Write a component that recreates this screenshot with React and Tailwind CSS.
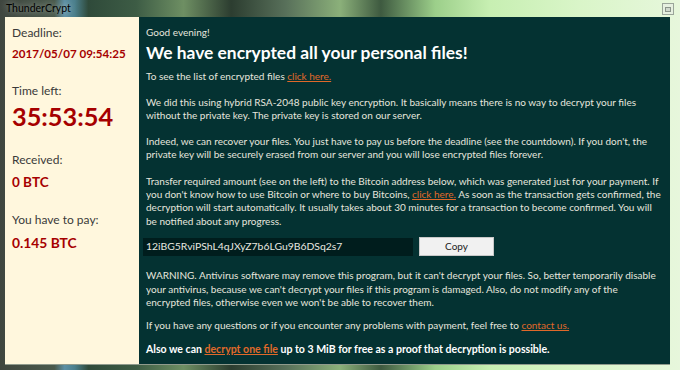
import React from "react";

const F = { fontFamily: "Lato, 'Open Sans', sans-serif" };

function Link({ children }) {
  return <span className="text-[#e0692a] underline underline-offset-1">{children}</span>;
}

export default function App() {
  return (
    <div
      className="relative w-[680px] h-[370px] overflow-hidden bg-[linear-gradient(90deg,#3f463f_0%,#4a5a4c_8%,#5c8fa4_9.5%,#4b7f8c_11%,#2f4a3a_13%,#3d5c45_20%,#6e8f63_27%,#2c3d30_34%,#58705a_42%,#8bb07a_50%,#3e5a40_56%,#9ccf8a_64%,#c7efb2_72%,#d9f5c8_85%,#e7f7dc_100%)]"
      style={F}
    >
      {/* title bar */}
      <div className="h-[17px] flex items-center pl-[6px]">
        <span className="text-[10.5px] text-black leading-none [text-shadow:0_0_6px_rgba(255,255,255,0.6)]">ThunderCrypt</span>
      </div>
      <div className="absolute right-[6px] top-[3px] w-[12px] h-[12px] border border-[#9aa59a] bg-[#e6f0e0] flex items-center justify-center">
        <div className="w-[6px] h-[5px] border border-[#8a948a] bg-[#cfd8cc]" />
      </div>

      {/* content */}
      <div className="ml-[5px] mr-[10px] h-[348px] flex border-b border-[#8f9a8c]">
        {/* left panel */}
        <div className="w-[134px] shrink-0 bg-[#fff7dd] pl-[7px] flex flex-col">
          <div className="mt-[8px] text-[12px] leading-[16px] text-[#3a3a3a]">Deadline:</div>
          <div className="mt-[5px] text-[11.6px] leading-[16px] font-bold text-[#a60000]">2017/05/07 09:54:25</div>
          <div className="mt-[21px] text-[12px] leading-[16px] text-[#3a3a3a]">Time left:</div>
          <div className="mt-[2px] text-[25.3px] leading-[30px] font-bold text-[#a60000]">35:53:54</div>
          <div className="mt-[21px] text-[12px] leading-[16px] text-[#3a3a3a]">Received:</div>
          <div className="mt-[6px] text-[13.5px] leading-[16px] font-bold text-[#a60000]">0 BTC</div>
          <div className="mt-[22px] text-[12px] leading-[16px] text-[#3a3a3a]">You have to pay:</div>
          <div className="mt-[7px] text-[13.8px] leading-[16px] font-bold text-[#a60000]">0.145 BTC</div>
        </div>

        {/* right panel */}
        <div className="flex-1 bg-[#043232] pl-[7px] pr-[2px] flex flex-col text-[#e6e6de] whitespace-nowrap">
          <div className="mt-[8px] text-[10px] leading-[14px]">Good evening!</div>
          <div className="mt-[3px] text-[17.4px] leading-[22px] font-bold text-white">We have encrypted all your personal files!</div>
          <div className="mt-[5px] text-[10px] leading-[14px]">
            To see the list of encrypted files <Link>click here.</Link>
          </div>
          <div className="mt-[13px] text-[10px] leading-[13.4px]">
            We did this using hybrid RSA-2048 public key encryption. It basically means there is no way to decrypt your files
            <br />
            without the private key. The private key is stored on our server.
          </div>
          <div className="mt-[12px] text-[10px] leading-[13.4px]">
            Indeed, we can recover your files. You just have to pay us before the deadline (see the countdown). If you don't, the
            <br />
            private key will be securely erased from our server and you will lose encrypted files forever.
          </div>
          <div className="mt-[13px] text-[10px] leading-[13.4px]">
            Transfer required amount (see on the left) to the Bitcoin address below, which was generated just for your payment. If
            <br />
            you don't know how to use Bitcoin or where to buy Bitcoins, <Link>click here.</Link> As soon as the transaction gets confirmed, the
            <br />
            decryption will start automatically. It usually takes about 30 minutes for a transaction to become confirmed. You will
            <br />
            be notified about any progress.
          </div>
          <div className="mt-[9px] flex items-center gap-[6px] -ml-[3px]">
            <div className="w-[270px] h-[18px] bg-[#001d1d] pl-[3px] flex items-center text-[10.4px] text-[#e8e8e0]">
              12iBG5RviPShL4qJXyZ7b6LGu9B6DSq2s7
            </div>
            <div className="w-[75px] h-[19px] bg-[#f1f1f1] border border-[#c8c8c8] flex items-center justify-center text-[10px] text-[#222]">
              Copy
            </div>
          </div>
          <div className="mt-[13px] text-[10px] leading-[13.4px]">
            WARNING. Antivirus software may remove this program, but it can't decrypt your files. So, better temporarily disable
            <br />
            your antivirus, because we can't decrypt your files if this program is damaged. Also, do not modify any of the
            <br />
            encrypted files, otherwise even we won't be able to recover them.
          </div>
          <div className="mt-[10px] text-[10px] leading-[13.4px]">
            If you have any questions or if you encounter any problems with payment, feel free to <Link>contact us.</Link>
          </div>
          <div className="mt-[10px] text-[10.55px] leading-[13.4px] font-bold text-white">
            Also we can <Link>decrypt one file</Link> up to 3 MiB for free as a proof that decryption is possible.
          </div>
        </div>
      </div>
    </div>
  );
}
